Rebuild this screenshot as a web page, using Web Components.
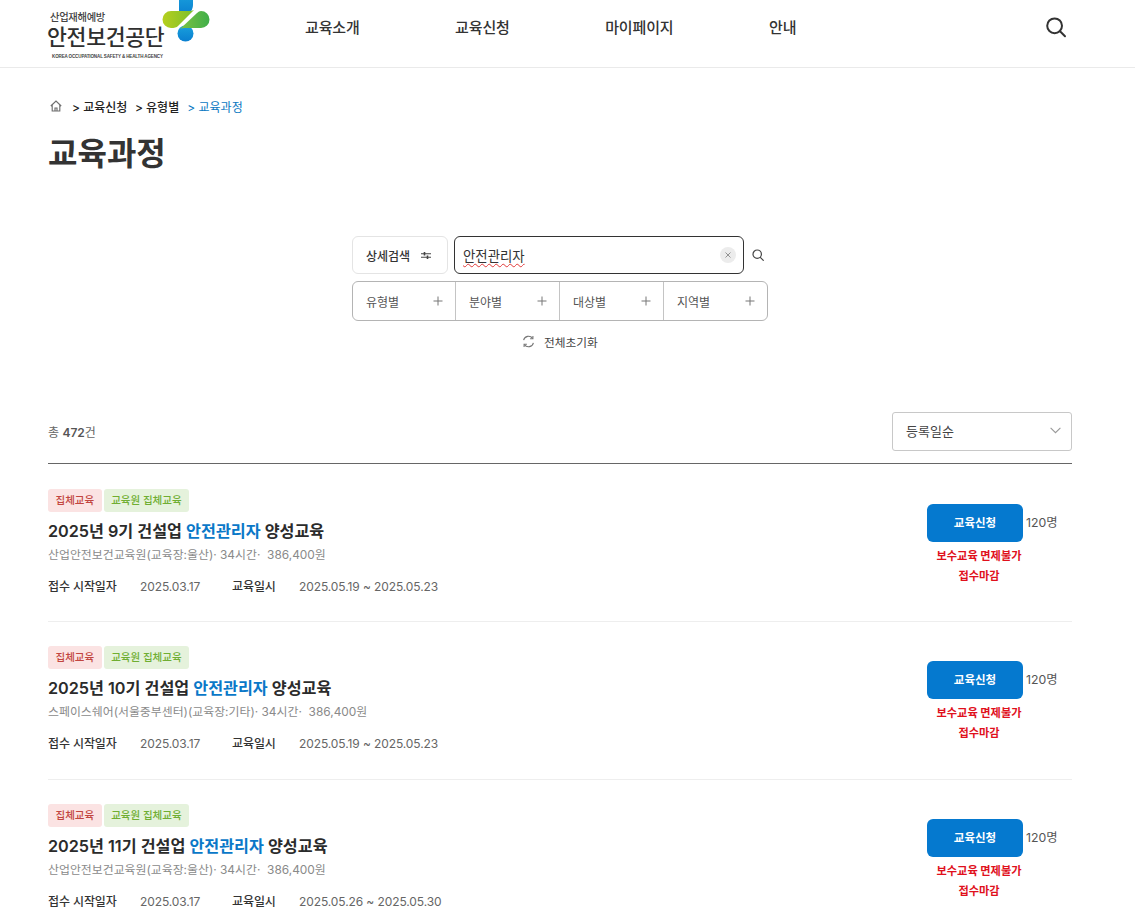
<!DOCTYPE html>
<html lang="ko">
<head>
	<meta charset="utf-8">
	<title>교육과정</title>
	<style>
		html, body { margin: 0; background: #fff; }
		body {
			font-family: Inter, "Noto Sans CJK KR", sans-serif;
			color: #333;
		}
		page-main {
			display: block;
			padding: 0 63px 0 48px;
			height: 854px;
			overflow: hidden;
		}
	</style>
</head>
<body>
	<site-header></site-header>
	<page-main>
		<bread-crumb></bread-crumb>
		<search-panel></search-panel>
		<list-toolbar total="472"></list-toolbar>
		<course-card num="9" place="산업안전보건교육원(교육장:울산)" start="2025.05.19" end="2025.05.23"></course-card>
		<course-card num="10" place="스페이스쉐어(서울중부센터)(교육장:기타)" start="2025.05.19" end="2025.05.23"></course-card>
		<course-card num="11" place="산업안전보건교육원(교육장:울산)" start="2025.05.26" end="2025.05.30"></course-card>
	</page-main>

	<script>
	function comp(name, html) {
		customElements.define(name, class extends HTMLElement {
			connectedCallback() {
				if (this.shadowRoot) return;
				this.attachShadow({mode: 'open'});
				this.shadowRoot.innerHTML = typeof html === 'function' ? html(this) : html;
			}
		});
	}

	comp('site-logo', `
		<style>
			:host { display: flex; height: 67px; width: 170px; align-items: flex-start; color: #333; }
			.txt { padding-top: 10px; white-space: nowrap; width: 113px; flex: none; }
			.a { font-size: 10.3px; line-height: 14px; padding-left: 3px; font-weight: 500; color: #444; letter-spacing: -.3px; }
			.b { font-size: 21.6px; line-height: 26px; font-weight: 500; color: #2f2f2f; letter-spacing: -.3px; }
			.c { font-size: 4.5px; line-height: 8px; padding-left: 5px; margin-top: 3px; font-weight: 700; color: #444; letter-spacing: -.12px; font-family: "Liberation Sans", sans-serif; }
			svg { flex: none; display: block; }
		</style>
		<div class="txt">
			<div class="a">산업재해예방</div>
			<div class="b">안전보건공단</div>
			<div class="c">KOREA OCCUPATIONAL SAFETY &amp; HEALTH AGENCY</div>
		</div>
		<svg width="50" height="44" viewBox="160 0 50 44">
			<defs>
				<linearGradient id="bl" x1="0" y1="0" x2="0" y2="1">
					<stop offset="0" stop-color="#19a0dc"/><stop offset="1" stop-color="#0a7fd0"/>
				</linearGradient>
				<linearGradient id="yg" x1="0" y1="0" x2="1" y2="0">
					<stop offset="0" stop-color="#b5cf1e"/><stop offset="1" stop-color="#7cbf2c"/>
				</linearGradient>
				<linearGradient id="gr" x1="0" y1="0" x2="1" y2="0">
					<stop offset="0" stop-color="#7cc242"/><stop offset="1" stop-color="#3fae49"/>
				</linearGradient>
			</defs>
			<path d="M179 -6h14v11q0 5 -4 8l-2 2h-8z" fill="url(#bl)"/>
			<circle cx="185.5" cy="33.5" r="8" fill="url(#bl)"/>
			<path d="M171 11h18q3 0 5 -1l-16 16q-2 2 -7 2a8.5 8.5 0 0 1 0 -17z" fill="url(#yg)"/>
			<path d="M201 11a8.5 8.5 0 0 1 0 17h-17q-2 0 -4 1l17 -16q2 -2 4 -2z" fill="url(#gr)"/>
		</svg>
	`);

	comp('site-header', `
		<style>
			:host { display: flex; height: 67px; border-bottom: 1px solid #eaeaea; padding-left: 47px; padding-right: 68px; align-items: flex-start; }
			nav { display: flex; gap: 95.5px; margin-left: 88px; padding-top: 18px; }
			nav a { font-size: 15px; line-height: 20px; font-weight: 500; color: #333; white-space: nowrap; letter-spacing: -.15px; }
			svg { margin-left: auto; margin-top: 16px; display: block; }
		</style>
		<site-logo></site-logo>
		<nav><a>교육소개</a><a>교육신청</a><a>마이페이지</a><a>안내</a></nav>
		<svg width="22" height="22" viewBox="0 0 22 22" fill="none" stroke="#333" stroke-width="2"><circle cx="9.6" cy="9.8" r="7.4"/><path d="M15 15.2l5 5" stroke-linecap="round"/></svg>
	`);

	comp('bread-crumb', `
		<style>
			:host { display: block; padding-top: 28px; color: #222; }
			.row { display: flex; align-items: center; height: 20px; font-size: 12px; font-weight: 500; white-space: nowrap; }
			svg { display: block; margin-left: 2px; margin-right: 10px; }
			span { margin-right: 7.5px; }
			.cur { color: #0a78c2; font-weight: 400; margin-left: .5px; }
			h1 { margin: 15px 0 0; font-size: 32px; line-height: 46px; font-weight: 700; color: #333; }
		</style>
		<div class="row">
			<svg width="12" height="12" viewBox="0 0 12 12" fill="none" stroke="#6f6f6f" stroke-width="1.15"><path d="M.8 6L6 1l5.2 5M2.2 5v6h7.6V5M5 11V8h2v3"/></svg>
			<span>&gt; 교육신청</span><span>&gt; 유형별</span><span class="cur">&gt; 교육과정</span>
		</div>
		<h1>교육과정</h1>
	`);

	comp('filter-item', el => `
		<style>
			:host { flex: 0 0 104px; box-sizing: border-box; display: flex; align-items: center; justify-content: space-between; padding: 0 12px 0 13px; font-size: 12px; color: #555; border-left: 1px solid #c4c4c4; }
			:host(:first-child) { flex-basis: 102px; border-left: 0; }
			svg { display: block; }
		</style>
		<span>${el.getAttribute('label')}</span>
		<svg width="10" height="10" viewBox="0 0 10 10" stroke="#777" stroke-width="1"><path d="M5 .5v9M.5 5h9"/></svg>
	`);

	comp('search-panel', `
		<style>
			:host { display: block; width: 416px; margin: 59px auto 0; }
			.top { display: flex; align-items: center; height: 38px; }
			.adv { width: 96px; height: 38px; box-sizing: border-box; border: 1px solid #e4e4e4; border-radius: 6px; display: flex; align-items: center; padding-left: 13px; gap: 11px; font-size: 12px; font-weight: 500; color: #333; margin-right: 6px; flex: none; }
			.box { width: 290px; height: 38px; box-sizing: border-box; border: 1px solid #333; border-radius: 6px; display: flex; align-items: center; padding: 0 7px 0 8px; font-size: 13.4px; color: #333; flex: none; }
			.box span { text-decoration: underline wavy #e03a3a 1px; text-underline-offset: 2px; }
			.clear { margin-left: auto; width: 16px; height: 16px; border-radius: 50%; background: #ececec; display: flex; align-items: center; justify-content: center; }
			.go { margin-left: 8px; display: block; }
			.filters { display: flex; height: 40px; box-sizing: border-box; border: 1px solid #b4b4b4; border-radius: 6px; margin-top: 7px; }
			.reset { display: flex; justify-content: center; align-items: center; gap: 9px; margin-top: 11px; height: 18px; font-size: 11.7px; color: #444; }
			.reset svg { display: block; }
		</style>
		<div class="top">
			<div class="adv">상세검색
				<svg width="10" height="9" viewBox="0 0 10 9" fill="none" stroke="#444" stroke-width="1.1"><path d="M0 2.8h10M0 6.2h10"/><path d="M3.5 1v3.4M6.5 4.6v3.4" stroke-width="1.6"/></svg>
			</div>
			<div class="box"><span>안전관리자</span>
				<div class="clear"><svg width="6" height="6" viewBox="0 0 6 6" stroke="#888" stroke-width=".9"><path d="M.5.5l5 5M5.5.5l-5 5"/></svg></div>
			</div>
			<svg class="go" width="12" height="12" viewBox="0 0 12 12" fill="none" stroke="#444" stroke-width="1.2"><circle cx="5.2" cy="5.2" r="4.2"/><path d="M8.3 8.3l3 3" stroke-linecap="round"/></svg>
		</div>
		<div class="filters">
			<filter-item label="유형별"></filter-item>
			<filter-item label="분야별"></filter-item>
			<filter-item label="대상별"></filter-item>
			<filter-item label="지역별"></filter-item>
		</div>
		<div class="reset">
			<svg width="13" height="13" viewBox="0 0 13 13" fill="none" stroke="#777" stroke-width="1.1"><path d="M1.6 5.2A5 5 0 0 1 10.6 3.4M11.4 7.8A5 5 0 0 1 2.4 9.6"/><path d="M10.9 1v2.8H8.1M2.1 12V9.2h2.8"/></svg>
			전체초기화
		</div>
	`);

	comp('list-toolbar', el => `
		<style>
			:host { display: flex; justify-content: space-between; align-items: center; height: 51px; margin-top: 62px; margin-bottom: 1px; border-bottom: 1px solid #666; }
			.tot { font-size: 12px; color: #666; margin-top: -12px; }
			b { font-weight: 600; color: #555; }
			.sel { align-self: flex-start; width: 180px; height: 39px; box-sizing: border-box; border: 1px solid #c8c8c8; border-radius: 3px; display: flex; align-items: center; justify-content: space-between; padding: 0 10px 2px 13px; font-size: 13px; color: #444; }
			svg { display: block; }
		</style>
		<div class="tot">총 <b>${el.getAttribute('total')}</b>건</div>
		<div class="sel">등록일순
			<svg width="11" height="7" viewBox="0 0 11 7" fill="none" stroke="#999" stroke-width="1.1"><path d="M.6.8L5.5 5.7 10.4.8"/></svg>
		</div>
	`);

	comp('tag-chip', `
		<style>
			:host { display: block; height: 23px; line-height: 23px; padding: 0 7.5px; border-radius: 3px; font-size: 10.5px; font-weight: 500; white-space: nowrap; background: #fbe3e3; color: #c2453f; }
			:host([kind="g"]) { background: #e5f2dc; color: #6fae32; }
		</style>
		<slot></slot>
	`);

	comp('course-card', el => `
		<style>
			:host { display: flex; justify-content: space-between; padding: 24px 0 26px; border-bottom: 1px solid #eee; }
			:host(:first-of-type) { padding-bottom: 25px; }
			:host(:last-child) { border-bottom: 0; }
			.tags { display: flex; gap: 2px; }
			h3 { margin: 7px 0 0; font-size: 16.2px; line-height: 24px; font-weight: 600; color: #2b2b2b; white-space: nowrap; }
			h3 em { font-style: normal; color: #0a78c8; }
			.sub { margin-top: 3px; font-size: 11.9px; line-height: 18px; color: #8a8a8a; white-space: pre; }
			.meta { margin-top: 14px; display: grid; grid-template-columns: 92px 92px 67px auto; font-size: 12px; line-height: 18px; color: #666; letter-spacing: -.1px; }
			.meta b { font-weight: 500; color: #333; }
			.side { width: 145px; padding-top: 15px; flex: none; }
			.act { display: flex; align-items: flex-start; gap: 3px; }
			.btn { width: 96px; height: 38px; box-sizing: border-box; padding-bottom: 2px; border-radius: 6px; background: #0579cf; color: #fff; font-size: 11.5px; font-weight: 700; display: flex; align-items: center; justify-content: center; }
			.cnt { font-size: 12.3px; line-height: 18px; color: #555; padding-top: 10px; }
			.note { width: 104px; text-align: center; margin-top: 4px; font-size: 11.2px; line-height: 20px; font-weight: 700; color: #e0101c; white-space: nowrap; }
		</style>
		<div>
			<div class="tags"><tag-chip>집체교육</tag-chip><tag-chip kind="g">교육원 집체교육</tag-chip></div>
			<h3>2025년 ${el.getAttribute('num')}기 건설업 <em>안전관리자</em> 양성교육</h3>
			<div class="sub">${el.getAttribute('place')}· 34시간·&#160; 386,400원</div>
			<div class="meta"><b>접수 시작일자</b><span>2025.03.17</span><b>교육일시</b><span>${el.getAttribute('start')} ~ ${el.getAttribute('end')}</span></div>
		</div>
		<div class="side">
			<div class="act"><div class="btn">교육신청</div><div class="cnt">120명</div></div>
			<div class="note">보수교육 면제불가<br>접수마감</div>
		</div>
	`);
	</script>
</body>
</html>
